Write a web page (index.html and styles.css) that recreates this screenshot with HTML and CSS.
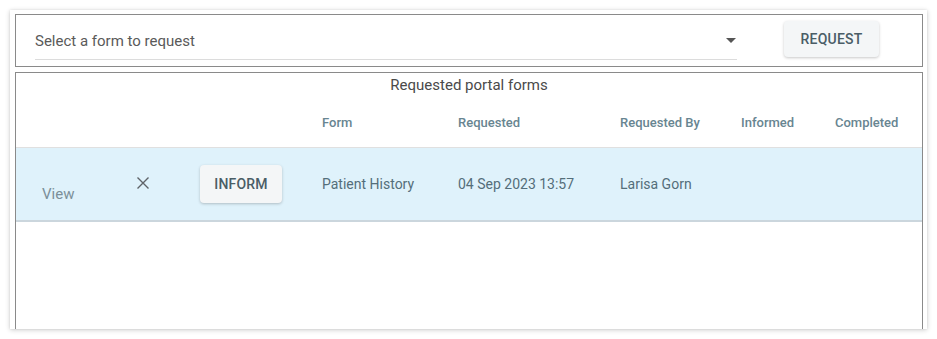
FILE: index.html
```html
<!DOCTYPE html>
<html>
<head>
<meta charset="utf-8">
<link rel="stylesheet" href="styles.css">
</head>
<body>
<div class="page">
  <div class="card">
    <div class="top-box">
      <div class="select">
        <span class="select-label">Select a form to request</span>
        <svg class="arrow" width="10" height="5" viewBox="0 0 10 5"><path d="M0 0 L10 0 L5 5 Z" fill="#555"/></svg>
      </div>
      <button class="btn btn-request">REQUEST</button>
    </div>
    <div class="table-box">
      <div class="title">Requested portal forms</div>
      <div class="grid head">
        <div class="c c1"></div>
        <div class="c c2"></div>
        <div class="c c3"></div>
        <div class="c">Form</div>
        <div class="c">Requested</div>
        <div class="c">Requested By</div>
        <div class="c">Informed</div>
        <div class="c">Completed</div>
      </div>
      <div class="grid row">
        <div class="c c1 view">View</div>
        <div class="c c2">
          <svg class="x-icon" width="12" height="12" viewBox="0 0 12 12"><path d="M0.5 0.5 L11.5 11.5 M11.5 0.5 L0.5 11.5" stroke="#5f6368" stroke-width="1.4" fill="none"/></svg>
        </div>
        <div class="c c3"><button class="btn btn-inform">INFORM</button></div>
        <div class="c">Patient History</div>
        <div class="c">04 Sep 2023 13:57</div>
        <div class="c">Larisa Gorn</div>
        <div class="c"></div>
        <div class="c"></div>
      </div>
    </div>
  </div>
</div>
</body>
</html>
```

FILE: styles.css
```css
* { box-sizing: border-box; }
html, body { margin: 0; padding: 0; background: #fff; }
body { font-family: Roboto, "Noto Sans", Arial, sans-serif; }

.page { padding: 10px; }

.card {
  width: 917px;
  height: 319px;
  background: #fff;
  box-shadow: 0 1px 5px rgba(0,0,0,0.2), 0 0 2px rgba(0,0,0,0.08);
  padding: 4px 4px 0 5px;
  overflow: hidden;
  display: flex;
  flex-direction: column;
  gap: 5px;
}

.top-box {
  height: 53px;
  border: 1px solid #8a8a8a;
  display: flex;
  align-items: flex-start;
  padding-left: 19px;
}

.select {
  width: 702px;
  height: 45px;
  border-bottom: 1px solid #dcdcdc;
  display: flex;
  align-items: center;
  justify-content: space-between;
  padding-top: 8px;
  padding-right: 1px;
}
.select-label {
  font-size: 15px;
  color: #5a5a5a;
}
.arrow { margin-top: -1px; }

.btn {
  font-family: Roboto, "Noto Sans", Arial, sans-serif;
  font-weight: 500;
  font-size: 14px;
  color: #4a5d66;
  background: #f4f6f7;
  border: none;
  border-radius: 4px;
  box-shadow: 0 1px 3px rgba(0,0,0,0.22);
  letter-spacing: 0.2px;
  padding: 0;
}
.btn-request {
  width: 95px;
  height: 36px;
  margin-left: 47px;
  margin-top: 6px;
}
.btn-inform {
  width: 82px;
  height: 38px;
}

.table-box {
  flex: 1;
  border: 1px solid #8a8a8a;
  border-bottom: none;
}

.title {
  height: 25px;
  text-align: center;
  font-size: 15px;
  color: #4a4a4a;
  line-height: 25px;
}

.grid {
  display: grid;
  grid-template-columns: 114px 60px 122px 136px 162px 121px 94px 1fr;
}
.c { padding-left: 10px; display: flex; align-items: center; }
.c1 { padding-left: 26px; }
.c2 { padding-left: 7px; }

.head {
  height: 50px;
  border-bottom: 1px solid #e0e0e0;
  font-size: 13px;
  font-weight: 500;
  color: #688591;
}

.row {
  height: 74px;
  background: #dff2fb;
  border-bottom: 2px solid #cbd6dd;
  font-size: 14px;
  color: #546e7a;
}
.view {
  align-self: end;
  align-items: flex-end;
  padding-bottom: 17px;
  font-size: 15px;
  color: #7b8f99;
}
.x-icon { margin-top: -2px; }
```
